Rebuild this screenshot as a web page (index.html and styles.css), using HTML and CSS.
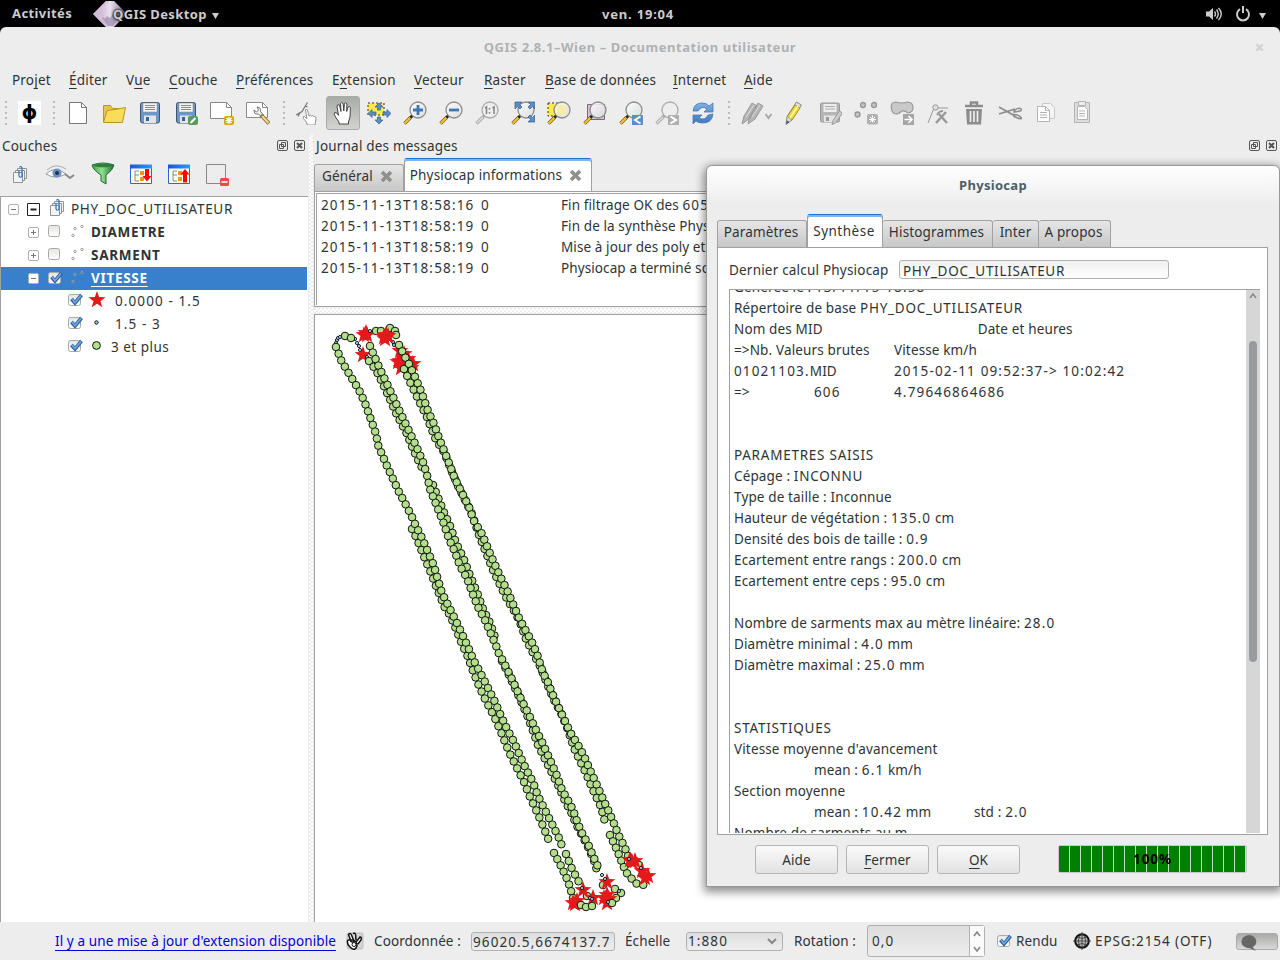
FILE: index.html
```html
<!DOCTYPE html>
<html lang="fr">
<head>
<meta charset="utf-8">
<title>QGIS 2.8.1-Wien - Documentation utilisateur</title>
<link rel="stylesheet" href="styles.css">
</head>
<body>
<svg class="defs" width="0" height="0">
  <defs>
    <linearGradient id="lens" x1="0" y1="0" x2="1" y2="1"><stop offset="0" stop-color="#fff"/><stop offset="1" stop-color="#d8dada"/></linearGradient>
    <linearGradient id="grn" x1="0" x2="1"><stop offset="0" stop-color="#3f9d4c"/><stop offset=".45" stop-color="#8fe08f"/><stop offset="1" stop-color="#1d6e2c"/></linearGradient>
    <linearGradient id="blu" x1="0" x2="1"><stop offset="0" stop-color="#1e54d8"/><stop offset="1" stop-color="#2b9bf4"/></linearGradient>
    <linearGradient id="box" x1="0" y1="0" x2="0" y2="1"><stop offset="0" stop-color="#e4e5e1"/><stop offset="1" stop-color="#fff"/></linearGradient>
    <linearGradient id="ref" x1="0" y1="0" x2="0" y2="1"><stop offset="0" stop-color="#7fb0e2"/><stop offset="1" stop-color="#3c78bd"/></linearGradient>
    <linearGradient id="gem" x1="0" x2="1"><stop offset="0" stop-color="#b49ac0"/><stop offset=".5" stop-color="#e9e2ee"/><stop offset="1" stop-color="#7d6691"/></linearGradient>
    <g id="magnifier">
      <path d="M9.500 14.500l-3 3" stroke="#222" stroke-width="3"/>
      <path d="M7.500 16.500L1.500 22.500" stroke="#7a5a10" stroke-width="3.400"/>
      <path d="M7.300 16.700L1.800 22.200" stroke="#f5c33b" stroke-width="2"/>
      <circle cx="15" cy="9" r="8" fill="url(#lens)" fill-opacity=".85" stroke="#8b8d8a" stroke-width="1.300"/>
    </g>
    <g id="magnifier-off">
      <path d="M9.500 14.500L1.500 22.500" stroke="#aaa" stroke-width="3.200"/>
      <path d="M8 16l-6 6" stroke="#e2e2e2" stroke-width="1.400"/>
      <circle cx="15" cy="9" r="8" fill="#eee" stroke="#aaa" stroke-width="1.300"/>
    </g>
    <g id="group" fill="#f4f4f4" stroke="#888" stroke-width=".9">
      <path d="M5.500 3.500h9v10h-9z"/>
      <path d="M3.500 5.500h9v10h-9z"/>
      <path d="M1.500 7.500h9v10h-9z"/>
      <path d="M7 5.500v5.500q1.500 2.500 3 0V2.500q-1.500-2-2.500 0" fill="none" stroke="#2f6fb0" stroke-width="1.200"/>
    </g>
    <g id="check">
      <rect x=".5" y="1.500" width="12" height="11" rx="2" fill="url(#box)" stroke="#a8aaa5"/>
      <path d="M3.500 6l3.500 4L13.500 2" fill="none" stroke="#2c5f9e" stroke-width="3.600"/>
      <path d="M4 6l3 3.500L13 2.500" fill="none" stroke="#6fa5e2" stroke-width="1.800"/>
    </g>
    <g id="uncheck"><rect x=".5" y=".5" width="11" height="11" rx="2" fill="url(#box)" stroke="#a8aaa5"/></g>
    <g id="points" fill="none" stroke="#9a9c9a"><circle cx="2" cy="10.500" r="1.200"/><circle cx="4" cy="3.500" r="1.200"/><circle cx="11" cy="1.500" r="1.200"/></g>
    <g id="plus"><rect x=".5" y=".5" width="10" height="10" rx="1.500" fill="#fff" stroke="#b0b2b0"/><path d="M3 5.500h5M5.500 3v5" stroke="#777"/></g>
    <g id="minus"><rect x=".5" y=".5" width="10" height="10" rx="1.500" fill="#fff" stroke="#b0b2b0"/><path d="M3 5.500h5" stroke="#777"/></g>
    <g id="float"><rect x=".5" y=".5" width="10" height="10" rx="1.500" fill="none" stroke="#555"/><path d="M4.500 2.500h4v4h-4zM2.500 4.500h4v4h-4z" fill="#ededed" stroke="#555"/></g>
    <g id="dockclose"><rect x=".5" y=".5" width="10" height="10" rx="1.500" fill="none" stroke="#555"/><path d="M3 3l5 5M8 3L3 8" stroke="#555" stroke-width="2"/></g>
    <path id="cross" d="M2 2l9 9M11 2L2 11" stroke="#8e908d" stroke-width="3.600"/>
    <path id="hand" d="M8 23v-2L4.500 16Q2.300 12.500 3.800 11.500q1.700-.5 3.700 2.800L6 5q.5-2.200 2.500-.8L10 10.500 9.500 2.500q1.200-1.800 2.600 0l.7 7.500.6-7.500q1.500-1.500 2.500.2L15.700 10.500 17 6q1.800-1.300 2.400.7L19 16l-1.500 5v2z" fill="#fff" stroke="#333" stroke-width=".9"/>
  </defs>
</svg>

<header class="topbar">
  <span class="activities">Activités</span>
  <span class="app">
    <svg class="gem" width="34" height="26" viewBox="0 0 34 26"><path d="M0 13L13 0h8l13 13-13 13h-8z" fill="url(#gem)"/><path d="M7 19l3-3 2 2 2-3 3 2 3-4 3 2 3-3v5l-6 8h-6z" fill="#8f7aa2" opacity=".6"/><path d="M0 13L13 0h3L6 12l10 14h-3z" fill="#d7c3de" opacity=".7"/></svg>
    <span class="appname">QGIS Desktop</span>
    <svg class="caret" width="7" height="6"><path d="M0 0h7L3.500 6z" fill="#ccc"/></svg>
  </span>
  <span class="clock">ven. 19:04</span>
  <span class="tray">
    <svg width="17" height="14" viewBox="0 0 17 14"><path d="M0 4.500h3L7 1v12L3 9.500H0z" fill="#ccc"/><path d="M8.500 4.500q2 2.500 0 5M10.500 2.500q3.500 4.500 0 9M12.500 1q5.500 6 0 12" fill="none" stroke="#ccc" stroke-width="1.400"/></svg>
    <svg width="16" height="16" viewBox="0 0 16 16"><path d="M5 3.200a6 6 0 1 0 6 0" fill="none" stroke="#ccc" stroke-width="2"/><path d="M8 0v7" stroke="#ccc" stroke-width="2"/></svg>
    <svg width="7" height="6"><path d="M0 0h7L3.500 6z" fill="#ccc"/></svg>
  </span>
</header>

<main class="window">
  <div class="titlebar"><span>QGIS 2.8.1–Wien – Documentation utilisateur</span><svg class="winclose" width="9" height="9" viewBox="0 0 13 13"><path d="M2 2l9 9M11 2L2 11" stroke="#d3d3d3" stroke-width="3.600"/></svg></div>
  <nav class="menu">
    <span>Pro<u>j</u>et</span><span><u>É</u>diter</span><span>V<u>u</u>e</span><span><u>C</u>ouche</span><span><u>P</u>références</span><span>E<u>x</u>tension</span><span><u>V</u>ecteur</span><span><u>R</u>aster</span><span><u>B</u>ase de données</span><span><u>I</u>nternet</span><span><u>A</u>ide</span>
  </nav>

  <div class="toolbar">
    <i class="grip"></i><span class="phi">ϕ</span><i class="grip"></i>
    <b><svg viewBox="0 0 24 24"><path d="M3.500 1.500h12l5 5v16h-17z" fill="#fff" stroke="#777"/><path d="M15.500 1.500v5h5" fill="none" stroke="#777"/></svg></b>
    <b><svg viewBox="0 0 24 24"><path d="M1.500 21V4.500h7l2 3h10V11" fill="#e8c548" stroke="#b7962a"/><path d="M1.500 21.500L5 9.500l8-1 10.500-2-3 15z" fill="#fbdb58" stroke="#b7962a"/></svg></b>
    <b><svg viewBox="0 0 24 24"><rect x="2.500" y="1.500" width="19" height="20.500" rx="2" fill="#6b97cb" stroke="#45536a"/><path d="M5 2h14v9H5z" fill="#f2f2ee" stroke="#888" stroke-width=".5"/><path d="M7 4.500h10M7 6.500h10M7 8.500h10" stroke="#8a8a86"/><path d="M6 14.500h12V22H6z" fill="#e4e4e4"/><path d="M8 16h3v4H8z" fill="#3465a4"/></svg></b>
    <b><svg viewBox="0 0 24 24"><rect x="2.500" y="1.500" width="19" height="20.500" rx="2" fill="#6b97cb" stroke="#45536a"/><path d="M5 2h14v9H5z" fill="#f2f2ee" stroke="#888" stroke-width=".5"/><path d="M7 4.500h10M7 6.500h10M7 8.500h10" stroke="#8a8a86"/><path d="M6 14.500h12V22H6z" fill="#e4e4e4"/><path d="M8 16h3v4H8z" fill="#3465a4"/><rect x="14" y="15" width="10" height="9" rx="2" fill="#5a9a5a"/><path d="M16.500 22l5-5" stroke="#fff" stroke-width="2"/></svg></b>
    <b><svg viewBox="0 0 24 24"><path d="M.5 1.500h16l5 5v11H.5z" fill="#fff" stroke="#888"/><path d="M16.500 1.500v5h5" fill="none" stroke="#888"/><rect x="14" y="15" width="10" height="9" rx="2" fill="#d2a814"/><path d="M19 16v7M15.500 19.500h7M16.500 17l5 5M21.500 17l-5 5" stroke="#fff" stroke-width="1.200"/></svg></b>
    <b><svg viewBox="0 0 24 24"><path d="M.5 1.500h16l5 5v10H.5z" fill="#fff" stroke="#888"/><path d="M16.500 1.500v5h5" fill="none" stroke="#888"/><path d="M8 9q0 5 4.500 4l3 3 2-2-3-3.500q1-4-3.500-4.500l1.500 3-2 2z" fill="#eee" stroke="#666" stroke-width=".9"/><path d="M15 14l8 8.500" stroke="#7d6b2a" stroke-width="4"/><path d="M16 15l6.500 7" stroke="#f2d88a" stroke-width="2.200"/></svg></b>
    <i class="grip"></i>
    <b><svg viewBox="0 0 24 24"><path d="M12 24v-2L8.500 17.500q-1-2.500 1-2l2.500 2.500-1.500-9q1-2 2 0l1.500 6q1.500-1.500 2.500 0 1.500-1 2.500.5 2-.2 2 2L20 24z" fill="#fff" stroke="#888" stroke-width=".9"/><path d="M1 14l6-3.500 3-5 2.500-4M5 11.500l-2 4M10 5l2.500 1" fill="none" stroke="#777" stroke-width="1.200"/></svg></b>
    <b class="active"><svg viewBox="0 0 24 24"><use href="#hand"/></svg></b>
    <b><svg viewBox="0 0 24 24"><path d="M1 2h16v12H1z" fill="#fce94f" stroke="#333" stroke-dasharray="2 2"/><path d="M12 2l4 4h-2.500v3h-3V6H8zM12 23l4-4h-2.500v-3h-3v3H8zM1 12.500l4-4V11h4v3H5v2.500zM24 12.500l-4-4V11h-4v3h4v2.500z" fill="#5b8ec5" stroke="#2f5f95" stroke-width=".7"/></svg></b>
    <b><svg viewBox="0 0 24 24"><use href="#magnifier"/><path d="M15 4v10M10 9h10" stroke="#3f75b3" stroke-width="2.800"/></svg></b>
    <b><svg viewBox="0 0 24 24"><use href="#magnifier"/><path d="M10 9h10" stroke="#3f75b3" stroke-width="2.800"/></svg></b>
    <b><svg viewBox="0 0 24 24"><use href="#magnifier-off"/><path d="M10 7l1.500-1v7M17.500 7L19 6v7" fill="none" stroke="#888" stroke-width="1.600"/><path d="M14.500 7v1.500M14.500 11v1.500" stroke="#888" stroke-width="1.600"/></svg></b>
    <b><svg viewBox="0 0 24 24"><use href="#magnifier"/><path d="M4 1h7L8.500 3.500 11 6 9 8 6.500 5.500 4 8zM24 1h-7l2.500 2.500L17 6l2 2 2.500-2.500L24 8zM24 21h-7l2.500-2.500L17 16l2-2 2.500 2.500L24 14z" fill="#5b8ec5" stroke="#2f5f95" stroke-width=".7"/></svg></b>
    <b><svg viewBox="0 0 24 24"><path d="M1 2h14v13H1z" fill="#fce94f" stroke="#333" stroke-dasharray="2 2"/><use href="#magnifier"/><path d="M10 4h9v10h-9z" fill="#f7efa0" opacity=".8"/></svg></b>
    <b><svg viewBox="0 0 24 24"><path d="M4.500 3.500h17v15h-17z" fill="#d4c4d4" stroke="#7b667b"/><use href="#magnifier"/></svg></b>
    <b><svg viewBox="0 0 24 24"><use href="#magnifier"/><path d="M13 14h11v10H13z" fill="#5b8ec5"/><path d="M21.500 15.500L16 19l5.500 3.500" fill="none" stroke="#fff" stroke-width="2"/></svg></b>
    <b><svg viewBox="0 0 24 24"><use href="#magnifier-off"/><path d="M13 14h11v10H13z" fill="#b0b0b0"/><path d="M15.500 15.500L21 19l-5.500 3.500" fill="none" stroke="#fff" stroke-width="2"/></svg></b>
    <b><svg viewBox="0 0 24 24"><path d="M2 10Q3 2 11 2q5 0 7 3l4-3v9h-9l3-3q-5-4-9 2zM22 13q-1 9-10 9-5 0-7-2l-3 3v-9h9l-3 3q6 3 9-3z" fill="url(#ref)" stroke="#4679b5" stroke-width=".8"/></svg></b>
    <i class="grip"></i>
    <b class="wide"><svg class="w32" viewBox="0 0 32 24"><path d="M1 23l2-8L11 2l5 3-8 13zM7 23l2-8L17 2l5 3-8 13z" fill="#b5b5b5" stroke="#999"/><path d="M5 16l8-12M11 16l8-12" stroke="#ddd"/><path d="M24.500 13l3 4 3-4" fill="none" stroke="#aaa" stroke-width="2"/></svg></b>
    <b><svg viewBox="0 0 24 24"><path d="M4 23.500l1-8L14.500 1l5 3L10 19z" fill="#ddd" stroke="#888"/><path d="M5.500 15.500L13 4l5 3-8 12z" fill="#efd93c" stroke="#a8962a"/><path d="M8 17l8-12" stroke="#fff7a0" stroke-width="1.500"/><path d="M4 23.500l1-4 2.500 1.500z" fill="#555"/></svg></b>
    <b><svg viewBox="0 0 24 24"><rect x="2.500" y="2" width="19" height="19" rx="1.500" fill="#b5b5b5" stroke="#999"/><path d="M5.500 3h13v8h-13z" fill="#eee"/><path d="M7 5.500h10M7 8h10" stroke="#aaa"/><path d="M6 14.500h12V21H6z" fill="#e4e4e4"/><path d="M8 16h3v4H8z" fill="#999"/><path d="M14 23.500l1-4L21.500 10l3 2-7 10z" fill="#ccc" stroke="#999"/></svg></b>
    <b><svg viewBox="0 0 24 24"><g fill="#c4c4c4" stroke="#969696" stroke-width="1.300"><circle cx="9" cy="4" r="2.500"/><circle cx="20" cy="4" r="2.500"/><circle cx="3.500" cy="13.500" r="2.500"/></g><rect x="13" y="13" width="11" height="10.500" rx="2" fill="#b0b0b0"/><path d="M18.500 14.500v7M15 18.500h7M16 16l5 5M21 16l-5 5" stroke="#fff"/></svg></b>
    <b><svg viewBox="0 0 24 24"><path d="M1.500 8Q0 1 6 1q6 2 11 0 6 0 6 5.500 0 5-5 5.500-3-2.500-6-2-4 4-8 2.500-2-1.500-2.500-4.500z" fill="#c9c9c9" stroke="#999" stroke-width="1.200"/><path d="M13 13h11v11H13z" fill="#a5a5a5"/><path d="M14.500 18.500h7M18.500 15L22 18.500 18.500 22" fill="none" stroke="#fff" stroke-width="1.600"/></svg></b>
    <b><svg viewBox="0 0 24 24"><path d="M2 22L8 7h14" fill="none" stroke="#999"/><circle cx="9.500" cy="6.500" r="2.700" fill="#ddd" stroke="#999"/><path d="M10 22L20 11" fill="none" stroke="#999" stroke-width="2.500"/><path d="M13 13l8 9" fill="none" stroke="#999" stroke-width="2.500"/><path d="M11 14q2-4 6-4" fill="none" stroke="#999" stroke-width="2"/></svg></b>
    <b><svg viewBox="0 0 24 24"><path d="M3 5h18M9 4V1.500h6V4" fill="none" stroke="#8c8c8c" stroke-width="2.500"/><path d="M4 8h16l-1 15.500H5z" fill="#8c8c8c"/><path d="M8.500 10v11M12 10v11M15.500 10v11" stroke="#eee" stroke-width="1.700"/></svg></b>
    <b><svg viewBox="0 0 24 24"><path d="M1 6l16 9M1 13l16-5" stroke="#8c8c8c" stroke-width="1.800"/><path d="M16 10q4-4 7-2t-7 3zM16 13.500q5 0 7 3t-7-1z" fill="none" stroke="#8c8c8c" stroke-width="1.500"/></svg></b>
    <b><svg viewBox="0 0 24 24"><path d="M8.500 2.500h8l4 4v11h-12z" fill="#f4f4f4" stroke="#c8c8c8"/><path d="M3.500 5.500h8l4 4v11h-12z" fill="#fff" stroke="#b4b4b4"/><path d="M11.500 5.500v4h4M6 11.500h7M6 14h7M6 16.500h7" fill="none" stroke="#b4b4b4"/></svg></b>
    <b><svg viewBox="0 0 24 24"><path d="M4.500 1.500h15v20h-15z" fill="#ddd" stroke="#b4b4b4"/><path d="M7.500 5.500h7l3 3v10h-10z" fill="#fff" stroke="#b4b4b4"/><path d="M8.500 .5h7v4h-7z" fill="#eee" stroke="#b4b4b4"/><path d="M9 10h6M9 12.500h6M9 15h6" stroke="#b4b4b4"/></svg></b>
  </div>

  <div class="work">
    <section class="layers">
      <div class="dockhead"><span>Couches</span><svg width="11" height="11"><use href="#float"/></svg><svg width="11" height="11"><use href="#dockclose"/></svg></div>
      <div class="layertools">
        <svg width="20" height="24" viewBox="0 0 20 24"><use href="#group" y="3"/></svg>
        <svg width="30" height="24" viewBox="0 0 30 24"><path d="M0 12Q9 3 20 12 9 18 0 12z" fill="#fff" stroke="#999"/><path d="M1 8Q10 0 20 7" fill="none" stroke="#aaa"/><circle cx="11" cy="11" r="4.600" fill="#6b93c7"/><circle cx="11" cy="11" r="2" fill="#234"/><path d="M19 12l5 4 4-3" fill="none" stroke="#888" stroke-width="2"/></svg>
        <svg width="24" height="24" viewBox="0 0 24 24"><path d="M1 3q11-4 22 0-1 5-8 10v9l-5-3v-6Q2 8 1 3z" fill="url(#grn)" stroke="#256b30"/><ellipse cx="12" cy="3.500" rx="9" ry="1.700" fill="#2c7e3b"/></svg>
        <svg width="24" height="24" viewBox="0 0 24 24"><path d="M1.500 3.500h21v18h-21z" fill="#fff" stroke="#2968d8"/><path d="M1 2.500h22v4H1z" fill="url(#blu)"/><path d="M10 9H6v10h4M6 13h4" fill="none" stroke="#888"/><path d="M11 9h4v4h-4zM11 15h4v4h-4z" fill="#f7941d"/><path d="M16 7h4v7h2.500L18 19.500 13.500 14H16z" fill="#f00"/></svg>
        <svg width="24" height="24" viewBox="0 0 24 24"><path d="M1.500 3.500h21v18h-21z" fill="#fff" stroke="#2968d8"/><path d="M1 2.500h22v4H1z" fill="url(#blu)"/><path d="M10 9H6v10h4M6 13h4" fill="none" stroke="#888"/><path d="M11 9h4v4h-4zM11 15h4v4h-4z" fill="#f7941d"/><path d="M16 20.500h4v-8h2.500L18 7l-4.500 5.500H16z" fill="#f00"/></svg>
        <svg width="24" height="24" viewBox="0 0 24 24"><path d="M1.500 2.500h19v19h-19z" fill="none" stroke="#888"/><rect x="15" y="16" width="9" height="8" rx="1.500" fill="#ef4a4a"/><path d="M16.500 20h6" stroke="#fff" stroke-width="1.600"/></svg>
      </div>
      <div class="tree">
        <div class="row r0"><svg width="11" height="11"><use href="#minus"/></svg><svg width="13" height="13"><path d="M.5.5h12v12H.5z" fill="#fff" stroke="#222"/><path d="M3.500 6.500h6" stroke="#222" stroke-width="2"/></svg><svg width="16" height="20"><use href="#group"/></svg><span class="caps">PHY_DOC_UTILISATEUR</span></div>
        <div class="row r1"><svg width="11" height="11"><use href="#plus"/></svg><svg width="14" height="14"><use href="#uncheck"/></svg><svg width="14" height="14"><use href="#points"/></svg><span>DIAMETRE</span></div>
        <div class="row r1"><svg width="11" height="11"><use href="#plus"/></svg><svg width="14" height="14"><use href="#uncheck"/></svg><svg width="14" height="14"><use href="#points"/></svg><span>SARMENT</span></div>
        <div class="row r1 selected"><svg width="11" height="11"><use href="#minus"/></svg><svg width="15" height="14"><use href="#check"/></svg><svg width="14" height="14"><use href="#points"/></svg><span>VITESSE</span></div>
        <div class="row r2"><svg width="15" height="14"><use href="#check"/></svg><svg width="18" height="18" viewBox="-8 -8 16 16"><path d="M0-8l1.900 5.400 5.700.1-4.500 3.500 1.600 5.500L0 3.300l-4.700 3.200 1.600-5.500-4.500-3.500 5.700-.1z" fill="#e31a1c"/></svg><span class="num">0.0000 - 1.5</span></div>
        <div class="row r2"><svg width="15" height="14"><use href="#check"/></svg><svg width="17" height="17" viewBox="-8.500 -7.500 17 17"><circle r="1.700" fill="#a6cee3" stroke="#111"/></svg><span class="num">1.5 - 3</span></div>
        <div class="row r2 last"><svg width="15" height="14"><use href="#check"/></svg><svg width="17" height="17" viewBox="-8.500 -7.500 17 17"><circle r="3.900" fill="#b2df8a" stroke="#111"/></svg><span>3 et plus</span></div>
      </div>
    </section>
    <div class="split vertical"></div>
    <section class="right">
      <div class="dockhead"><span>Journal des messages</span><svg width="11" height="11"><use href="#float"/></svg><svg width="11" height="11"><use href="#dockclose"/></svg></div>
      <div class="tabs logtabs"><div class="tab t1"><span>Général</span><svg width="13" height="13"><use href="#cross"/></svg></div><div class="tab on t2"><span>Physiocap informations</span><svg width="13" height="13"><use href="#cross"/></svg></div></div>
      <div class="logpane"><pre class="log"><span class="num">2015-11-13T18:58:16</span>	0	Fin filtrage OK des <span class="num">605</span>
<span class="num">2015-11-13T18:58:19</span>	0	Fin de la synthèse Physiocap
<span class="num">2015-11-13T18:58:19</span>	0	Mise à jour des poly et
<span class="num">2015-11-13T18:58:19</span>	0	Physiocap a terminé son</pre></div>
      <div class="split horizontal"></div>
      <div class="map"><svg id="map" width="965" height="607" viewBox="315 315 965 607"></svg></div>
    </section>
  </div>

  <footer class="status">
    <a class="update">Il y a une mise à jour d'extension disponible</a>
    <svg width="18" height="18" viewBox="0 0 18 18"><rect x="1" y="1" width="16" height="16" rx="2" fill="#d4d4d4" stroke="#bbb"/><path d="M2.500 2.500q2-2 3 .5l2 5q1 2-1 2t-2-2zM7 1.500q2-1 2.500 1L10 8M2 8q6-1 8 2t0 6-6-1-2-7M10 10l4-5q2 0 1 3l-3 4" fill="#fff" stroke="#111" stroke-width="1.500"/><circle cx="8" cy="12.500" r="2" fill="#fff" stroke="#111"/></svg>
    <span>Coordonnée :</span>
    <div class="field coord num">96020.5,6674137.7</div>
    <span>Échelle</span>
    <div class="field combo"><span class="num">1:880</span><svg width="10" height="7"><path d="M1 1l4 4 4-4" fill="none" stroke="#888" stroke-width="2"/></svg></div>
    <span>Rotation :</span>
    <div class="spin"><span class="num">0,0</span><div class="arrows"><svg width="8" height="6"><path d="M1 5l3-4 3 4" fill="none" stroke="#888" stroke-width="1.600"/></svg><svg width="8" height="6"><path d="M1 1l3 4 3-4" fill="none" stroke="#888" stroke-width="1.600"/></svg></div></div>
    <svg class="ck" width="15" height="14"><use href="#check"/></svg>
    <span>Rendu</span>
    <svg width="18" height="18" viewBox="0 0 18 18"><circle cx="9" cy="9" r="6.800" fill="#bbb" stroke="#111" stroke-width="2"/><path d="M9 0v18M0 9h18M4 5q5 3 10 0M4 13q5-3 10 0" fill="none" stroke="#333" stroke-width=".8"/><ellipse cx="9" cy="9" rx="3.500" ry="6.500" fill="none" stroke="#333" stroke-width=".8"/></svg>
    <span class="epsg">EPSG:2154 (OTF)</span>
    <div class="msg"><svg width="18" height="17"><path d="M9 1a8 6.500 0 0 1 3.500 12L16 17l-6-2.800A8 6.500 0 0 1 9 1z" fill="#666"/></svg></div>
  </footer>
</main>

<aside class="dialog">
  <div class="dlgtitle">Physiocap</div>
  <div class="tabs dlgtabs"><div class="tab">Paramètres</div><div class="tab on">Synthèse</div><div class="tab">Histogrammes</div><div class="tab">Inter</div><div class="tab">A propos</div></div>
  <div class="pane">
    <div class="calc"><span>Dernier calcul Physiocap</span><div class="field caps">PHY_DOC_UTILISATEUR</div></div>
    <div class="report">
      <pre>Générée le : <span class="num">13/11/15 18:58</span>
Répertoire de base <span class="caps">PHY_DOC_UTILISATEUR</span>
Nom des MID		 Date et heures
=&gt;Nb. Valeurs brutes	Vitesse km/h
<span class="num">01021103.</span>MID	<span class="num">2015-02-11 09:52:37-&gt; 10:02:42</span>
=&gt;	<span class="num">606</span>	<span class="num">4.79646864686</span>


<span class="caps">PARAMETRES SAISIS</span>
Cépage : <span class="caps">INCONNU</span>
Type de taille : Inconnue
Hauteur de végétation : <span class="num">135.0</span> cm
Densité des bois de taille : <span class="num">0.9</span>
Ecartement entre rangs : <span class="num">200.0</span> cm
Ecartement entre ceps : <span class="num">95.0</span> cm

Nombre de sarments max au mètre linéaire: <span class="num">28.0</span>
Diamètre minimal : <span class="num">4.0</span> mm
Diamètre maximal : <span class="num">25.0</span> mm


<span class="caps">STATISTIQUES</span>
Vitesse moyenne d'avancement
	mean : <span class="num">6.1</span> km/h
Section moyenne
	mean : <span class="num">10.42</span> mm	std : <span class="num">2.0</span>
Nombre de sarments au m</pre>
      <div class="scroll"><svg width="8" height="6"><path d="M1 5l3-4 3 4" fill="none" stroke="#888" stroke-width="1.500"/></svg><i></i></div>
    </div>
  </div>
  <div class="actions"><div class="btn">Aide</div><div class="btn"><u>F</u>ermer</div><div class="btn"><u>O</u>K</div><div class="progress">100%</div></div>
</aside>
<script src="map.js"></script>
</body>
</html>
```

FILE: styles.css
```css
* { box-sizing: border-box; }
body { margin: 0; width: 1280px; height: 960px; overflow: hidden; background: #000; color: #2e3436; font: 13.5px/21px "Noto Sans", "Open Sans", sans-serif; letter-spacing: .1px; }
svg { display: block; flex: none; }
.defs { position: absolute; }
span { white-space: nowrap; }
pre span { white-space: pre; }
u { text-decoration: underline; text-underline-offset: 3px; text-decoration-thickness: 1px; text-decoration-skip-ink: none; }
.num { letter-spacing: 1.1px; }
.caps { letter-spacing: .7px; }

.topbar { height: 27px; display: grid; grid-template-columns: 93px 509px 604px 74px; align-items: center; background: #000; color: #ccc; font-weight: bold; font-size: 13px; letter-spacing: .4px; }
.activities { padding-left: 12px; }
.clock { padding-top: 1px; letter-spacing: .8px; }
.app { display: flex; align-items: center; height: 27px; }
.appname { margin: 1px 0 0 -14px; text-shadow: 0 0 3px #000, 0 0 3px #000; z-index: 1; }
.caret { margin: 4px 0 0 5px; }
.tray { display: flex; gap: 12px; align-items: center; }
.tray svg:nth-child(3) { margin: 4px 0 0 -4px; }

.window { height: 933px; background: #ededed; border-radius: 6px 6px 0 0; display: flex; flex-direction: column; }
.titlebar { height: 40px; display: flex; align-items: center; color: #b0b2b2; font-weight: bold; font-size: 13px; letter-spacing: .53px; }
.titlebar span { flex: 1; text-align: center; }
.winclose { margin: 0 16px 0 -25px; }
.menu { height: 27px; padding-left: 12px; display: grid; grid-template-columns: 57px 57px 43px 67px 96px 82px 70px 61px 128px 71px 60px; align-items: center; letter-spacing: .2px; }

.toolbar { height: 38px; display: flex; align-items: center; padding-left: 3px; }
.toolbar b { width: 36px; height: 34px; display: flex; align-items: center; justify-content: center; }
.toolbar b svg { width: 24px; height: 24px; }
.toolbar .wide { width: 38px; }
.toolbar .wide svg { width: 32px; }
.toolbar .active { width: 34px; margin: 0 1px; border: 1px solid #a9aba8; border-radius: 3px; background: linear-gradient(#a9aba8, #d3d4d2); }
.grip { width: 2px; height: 24px; margin: 0 2px; background: repeating-linear-gradient(#bbb 0 2px, transparent 2px 5.500px); }
.grip + .phi { margin-left: 9px; }
.phi { width: 23px; height: 24px; margin-right: 11px; background: #fff; color: #000; font: bold 20px/22px "DejaVu Sans", sans-serif; text-align: center; }
.toolbar b + .grip { margin: 0 4px 0 7px; }
.toolbar .grip:nth-of-type(2) { margin: 0 5px 0 1px; }
.toolbar .grip:last-of-type { margin-right: 8px; }

.work { height: 790px; display: flex; }
.layers { width: 308px; display: flex; flex-direction: column; }
.split { background: #ededed conic-gradient(#fff 25%, transparent 0 50%, #fff 0 75%, transparent 0) 0 0 / 4px 4px; }
.vertical { width: 4px; margin: 3px 1px 0; }
.horizontal { height: 5px; margin: 1px 0; flex: none; }
.right { flex: 1; min-width: 0; display: flex; flex-direction: column; }
.dockhead { height: 26px; flex: none; display: flex; align-items: center; padding: 1px 3px 0 2px; gap: 6px; letter-spacing: .2px; }
.dockhead span { flex: 1; padding-top: 1px; }
.layertools { height: 38px; display: grid; grid-template-columns: 34px 45px 38px 38px 38px 40px; align-items: center; padding: 0 0 7px 12px; }
.tree { flex: 1; background: #fff; border: solid #a0a2a0; border-width: 1px 0 0 1px; }
.row { height: 23px; margin-right: 1px; display: grid; align-items: center; }
.r0 { grid-template-columns: 19px 22px 22px 1fr; padding: 1px 0 0 7px; height: 24px; }
.r0 svg:nth-child(3) { margin-top: -3px; }
.r1 { grid-template-columns: 20px 23px 20px 1fr; padding-left: 27px; font-weight: bold; letter-spacing: .7px; }
.r1 svg:nth-child(2), .r1 svg:nth-child(3) { margin-top: -2px; }
.r2 { grid-template-columns: 20px 27px 1fr; padding-left: 67px; }
.r2 svg { margin-top: -3px; }
.r2.last { grid-template-columns: 20px 23px 1fr; letter-spacing: .5px; }
.selected { background: #3880cb; color: #fff; }
.selected span { text-decoration: underline; text-underline-offset: 3px; text-decoration-thickness: 1px; }

.tabs { display: flex; align-items: flex-end; }
.tab { background: linear-gradient(#e6e6e6, #c6c7c6); border: 1px solid #a0a2a0; border-left-width: 0; border-bottom: 0; border-radius: 3px 3px 0 0; text-align: center; white-space: nowrap; display: flex; align-items: center; justify-content: center; padding-bottom: 3px; letter-spacing: .15px; }
.tab:first-child { border-left-width: 1px; }
.tab.on { background: #fff; border-top: 1px solid #1f6fcb; box-shadow: inset 0 2px 0 #7fb6f2; border-left-width: 1px; padding-bottom: 0; }
.logtabs { height: 33px; flex: none; }
.t1 { width: 90px; height: 27px; gap: 7px; padding-right: 3px; }
.tab.t2 { width: 188px; height: 33px; gap: 7px; padding-right: 4px; }
.logpane { height: 116px; flex: none; background: #fff; border: 1px solid #a0a2a0; padding: 1px; }
pre { margin: 0; font: inherit; white-space: pre; tab-size: 80px; }
.log { height: 112px; border: solid #a0a2a0; border-width: 1px 1px 0; padding: 1px 4px; }
.map { flex: 1; background: #fff; border: solid #a0a2a0; border-width: 1px 0 0 1px; min-height: 0; overflow: hidden; }

.status { height: 38px; display: grid; grid-template-columns: 291px 28px 97px 154px 61px 108px 73px 130px 19px 57px 22px 141px 43px; padding-left: 55px; align-items: center; white-space: nowrap; }
.update { color: #0000e0; text-decoration: underline; text-underline-offset: 4px; text-decoration-skip-ink: none; letter-spacing: .1px; padding-top: 1px; }
.field { height: 19px; border: 1px solid #b0b2b0; border-radius: 3px; line-height: 18px; background: linear-gradient(#dedede, #eee); }
.coord { width: 144px; padding-left: 1px; overflow: hidden; }
.combo { width: 97px; padding: 0 5px 0 1px; display: flex; justify-content: space-between; align-items: center; }
.spin { width: 118px; height: 32px; border: 1px solid #b0b2b0; border-radius: 3px; background: linear-gradient(#dcdcdc, #eee); display: flex; align-items: center; justify-content: space-between; padding-left: 4px; }
.arrows { width: 15px; height: 30px; background: #fafafa; border-left: 1px solid #b0b2b0; display: flex; flex-direction: column; justify-content: space-around; align-items: center; }
.epsg { letter-spacing: .9px; }
.msg { width: 42px; height: 17px; border-radius: 3px; border: 1px solid #aaa; background: linear-gradient(#a9aba8, #d8d8d8); padding-left: 3px; }

.dialog { position: absolute; left: 706px; top: 165px; width: 574px; height: 722px; background: #ededed; border: 1px solid #979997; border-radius: 6px 6px 0 0; box-shadow: 0 3px 10px 2px rgba(0,0,0,.45); padding: 0 11px 0 10px; display: flex; flex-direction: column; }
.dlgtitle { height: 48px; margin: 0 -11px 0 -10px; padding: 9px 0; border-radius: 6px 6px 0 0; background: linear-gradient(#fff, #ededed 38px); text-align: center; font-weight: bold; font-size: 13px; letter-spacing: .3px; color: #4a6068; }
.dlgtabs { height: 33px; }
.dlgtabs .tab { height: 27px; width: 90px; padding-right: 2px; }
.dlgtabs .on { height: 33px; width: 76px; letter-spacing: .5px; }
.dlgtabs .tab:nth-child(3) { width: 110px; }
.dlgtabs .tab:nth-child(4) { width: 46px; padding: 0 0 3px; }
.dlgtabs .tab:nth-child(5) { width: 72px; }
.pane { height: 588px; background: #fff; border: 1px solid #a0a2a0; padding: 12px 7px 1px 11px; display: flex; flex-direction: column; }
.calc { height: 19px; display: flex; align-items: center; justify-content: space-between; margin: 0 91px 10px 0; }
.calc > span { padding-top: 2px; letter-spacing: .2px; }
.calc .field { width: 270px; padding-left: 3px; line-height: 20px; background: linear-gradient(#f0f0f0, #fff); }
.report { height: 544px; overflow: hidden; border: solid #a0a2a0; border-width: 1px 0 0 1px; display: flex; justify-content: space-between; }
.report pre { margin: -13px 0 0 4px; letter-spacing: .14px; }
.scroll { width: 14px; padding: 3px 3px; background: #d6d6d6; }
.scroll i { display: block; width: 8px; height: 321px; margin-top: 42px; border-radius: 4px; background: #999b9c; }
.actions { display: flex; gap: 8px; padding: 10px 0 0 38px; }
.btn { width: 83px; height: 29px; border: 1px solid #b4b6b4; border-radius: 3px; background: linear-gradient(#fafafa, #e2e2e2); text-align: center; line-height: 28px; }
.progress { width: 189px; height: 28px; margin-left: 30px; border: 1px solid #c8c8c8; border-radius: 2px; background: repeating-linear-gradient(90deg, #008000 0 10px, #c4ddc4 10px 11px); color: #000; font-weight: bold; letter-spacing: .9px; text-align: center; line-height: 27px; }
.report .num, .log .num { letter-spacing: 1.15px; }
.report .caps { letter-spacing: .75px; }
```

FILE: map.js
```js
const SVG = 'http://www.w3.org/2000/svg';
const map = document.getElementById('map');

function circle(x, y, r, fill, width) {
  const c = document.createElementNS(SVG, 'circle');
  c.setAttribute('cx', x);
  c.setAttribute('cy', y);
  c.setAttribute('r', r);
  c.setAttribute('fill', fill);
  c.setAttribute('stroke', '#111');
  c.setAttribute('stroke-width', width);
  map.appendChild(c);
}
const green = (x, y) => circle(x, y, 3.8, '#b2df8a', 1);
const blue = (x, y) => circle(x, y, 1.6, '#a6cee3', .9);
function star(x, y) {
  const p = document.createElementNS(SVG, 'path');
  p.setAttribute('d', 'M0-9l2.200 6 6.300.2-5 3.900 1.800 6.200L0 3.700l-5.300 3.600 1.800-6.200-5-3.900 6.300-.2z');
  p.setAttribute('transform', `translate(${x} ${y})`);
  p.setAttribute('fill', '#e31a1c');
  map.appendChild(p);
}

// Places a point about every `step` pixels along a list of x,y pairs.
function track(text, step) {
  const pts = text.split(' ').map(p => p.split(',').map(Number));
  let rest = 0;
  for (let i = 1; i < pts.length; i++) {
    const [ax, ay] = pts[i - 1], [bx, by] = pts[i];
    const len = Math.hypot(bx - ax, by - ay);
    let d = rest;
    for (; d < len; d += step) green(ax + (bx - ax) * d / len, ay + (by - ay) * d / len);
    rest = d - len;
  }
}

[[366,333],[364,335],[367,335],[363,355],[400,351],[404,354],[398,362],[401,368],[404,364],[402,366],[409,366],[413,364],[405,361],[400,361],[408,359],[411,368]].forEach(p => star(...p));
[[336,343],[337,340],[338,338],[340,337],[355,339],[357,343],[359,346],[360,350],[370,331],[367,357],[393,342],[394,345]].forEach(p => blue(...p));
[[341,337],[345,336],[351,338],[376,331],[381,331],[390,328],[395,331],[396,335]].slice(1).forEach(p => green(...p));
[[386,335],[384,337],[388,336],[385,339]].forEach(p => star(...p));

track('412,529 416,537 419,544 425,559 431,573 436,586 445,608 450,615 456,629 462,644 468,657 473,671 479,686 486,701 494,716 501,732 507,747 510,754 517,768 524,782 530,797 537,812 543,826 549,841', 7.7);
track('554,853 561,866 567,879 570,887 573,898', 7);
track('336,347 341,360 348,372 359,390 365,403 370,417 375,431 377,439 378,445 381,452 387,466 393,479 399,492 406,505 412,517 415,524 422,538 428,552 434,566 438,580 442,593 449,607 456,621 462,634 468,647 474,661 481,674 488,688 495,702 501,716 507,729 514,742 520,756 526,769 533,782 538,796 545,810 552,824 559,838 562,846', 7.2);
track('566,854 572,869 580,884', 7.5);

track('433,485 439,500 445,515 449,523 456,543 463,557 469,573 478,595 483,609 490,623 496,640', 7.4);
track('369,361 376,370 383,384 389,397 396,413 407,434 413,449 420,464 424,471', 7.4);
track('502,661 509,675 515,688 521,701 527,715 532,728 538,745 545,759 551,771 559,787 565,801 572,814 576,824 584,839 589,849 595,863 597,871', 7.6);
track('370,346 373,353 379,367 388,386 394,399 400,412 410,433 417,448 423,462 427,475 430,489 436,504 444,524 449,539 455,552 460,566 467,578 472,592 478,607 485,620 491,634 497,648 499,654 503,661 510,675 516,688 522,701 529,715 535,728 542,742 551,762 557,776 562,790 569,802 573,810 578,824 582,833 588,844 593,856 600,871', 7.1);

track('404,369 410,382 420,403 427,417 430,425 436,440 444,452 452,472 458,486 465,500 472,514 479,535 485,550 493,570 503,591 507,599 516,614 521,625 526,639 533,653 540,666 548,686 554,700 561,713 568,730 574,748 582,765 586,773 592,788 601,807 605,822', 7.6);
track('610,835 617,850 623,865 626,872 630,877 637,884 643,885 647,882', 7);
track('399,345 405,357 409,364 415,377 421,391 428,411 434,424 439,438 447,458 455,479 462,493 469,507 474,521 482,534 491,556 500,576 507,590 513,604 519,618 527,633 531,640 537,654 543,673 547,680 552,693 558,706 564,719 570,732 578,745 584,756 590,770 596,783 602,797 609,812 615,826 618,834 625,848 628,856', 7.1);

[[603,885],[615,889],[621,893],[616,898],[587,896],[639,865]].forEach(p => green(...p));
[[575,904],[577,901],[573,903],[583,890],[593,898],[607,882],[607,895],[604,898],[609,899],[607,903],[632,862],[635,861],[630,860],[642,871],[648,876],[645,878]].forEach(p => star(...p));
[[581,905],[586,907],[592,906],[612,903]].forEach(p => green(...p));
[[582,888],[590,898],[592,899],[602,875],[605,879],[629,859],[641,868],[608,902],[619,891]].forEach(p => blue(...p));
```
